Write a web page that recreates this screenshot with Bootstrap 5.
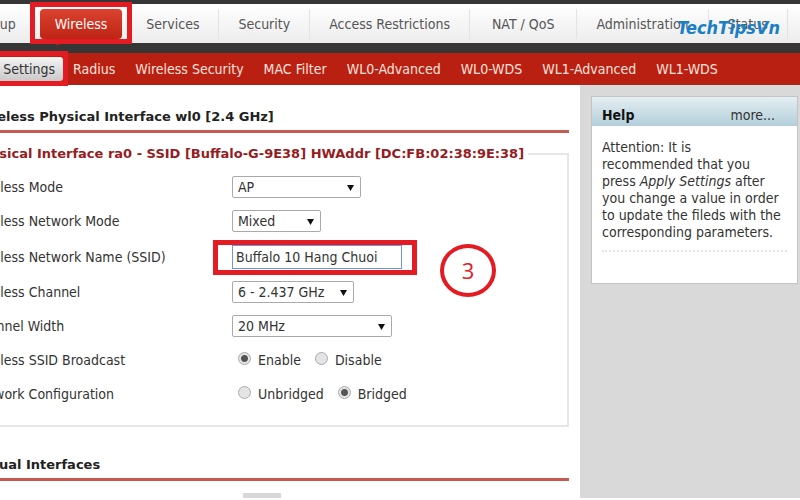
<!DOCTYPE html>
<html lang="en">
<head>
<meta charset="utf-8">
<meta name="viewport" content="width=device-width, initial-scale=1">
<title>Wireless Settings</title>
<link href="https://cdn.jsdelivr.net/npm/bootstrap@5.3.0/dist/css/bootstrap.min.css" rel="stylesheet">
<style>
  :root { --ui-font: "DejaVu Sans Condensed", "DejaVu Sans", sans-serif; --callout: #e31b23; }
  body { font-family: var(--ui-font); font-size: 14px; line-height: 18px; color: #333; background: #fff; overflow: hidden; }
  .page { height: 100vh; padding-bottom: 2px; overflow: hidden; }
  .top-bar { background: #363636; padding: 4px 0 10px; }
  .tabs { background: linear-gradient(#fff, #ececec); height: 39px; margin-left: -40px; }
  .tabs .nav-item + .nav-item { border-left: 1px solid #e3e3e3; }
  .tabs .nav-item.is-open, .tabs .nav-item.is-open + .nav-item { border-left-color: transparent; }
  .tabs .nav-link { color: #555; padding: 6px 19px; }
  .tabs .nav-link.roomy { padding: 6px 22px; }
  .tabs .nav-link.active { position: relative; color: #fff; background: linear-gradient(#dc4230, #bd2413); border-radius: 4px; padding: 6px 15px; margin: 0 4px; }
  .tabs .nav-link.active::after { content: ""; position: absolute; left: 9px; top: 100%; width: 18px; height: 7px; background: #bd2413; clip-path: polygon(0 0, 100% 0, 50% 100%); }
  .sub-bar { background: #b92012; height: 32px; flex-shrink: 0; border-bottom: 1px solid #9d2a20; }
  .sub-links { margin-left: -42px; }
  .sub-bar .nav-link { color: #ffe4de; padding: 3px 8px; margin-right: 4px; }
  .sub-bar .nav-link.active { color: #333; background: linear-gradient(#f4f4f4, #c9c9c9); border-radius: 3px; margin-right: 2px; }
  .body-row { min-height: 0; overflow: hidden; }
  .content-col { margin-left: -28px; padding: 20px 11px 0 0; }
  .section-title { font: 700 13px/24px "DejaVu Sans", sans-serif; color: #222; border-bottom: 3px solid #c65a50; padding-bottom: 1px; margin: 0; }
  .panel { border: 2px solid #e6e6e6; border-left: 0; padding: 0 0 14px; margin: 12px 0 26px; position: relative; }
  .panel legend { float: none; width: auto; font: 700 13px/18px "DejaVu Sans", sans-serif; color: #961c22; padding-right: 4px; margin: 0 0 7px; }
  .field { min-height: 34px; }
  .field-tall { min-height: 37px; }
  .field-name { width: 260px; }
  .pick { width: auto; height: 22px; font-size: 14px; line-height: 18px; color: #333; padding: 0 20px 0 5px; border: 1px solid #aaa; border-radius: 2px;
    background: #fff url("data:image/svg+xml,%3Csvg xmlns='http://www.w3.org/2000/svg' viewBox='0 0 8 8'%3E%3Cpath d='M0 1h8L4 8z' fill='%23111'/%3E%3C/svg%3E") no-repeat right 6px center / 7px 7px; }
  .pick-mode { width: 129px; } .pick-net { width: 89px; } .pick-chan { width: 122px; } .pick-width { width: 160px; }
  .ssid { width: 170px; height: 24px; font-size: 14px; color: #333; padding: 0 3px; border: 1px solid #6f97d8; border-radius: 0; }
  .ssid-wrap { position: relative; }
  .opt { margin-right: 14px; }
  .opt input { width: 13px; height: 13px; margin: 0 7px 3px 6px; border: 1px solid #aaa; background: #e4e4e4; }
  .opt + .opt input { margin-left: 0; }
  .opt .form-check-input:checked { background: radial-gradient(circle, #555 0 3px, #e4e4e4 4px); border-color: #aaa; }
  .callout-box { position: absolute; border: 5px solid var(--callout); pointer-events: none; }
  .callout-tab { left: 30px; top: 2px; width: 102px; height: 42px; }
  .callout-sub { left: -10px; top: 51px; width: 78px; height: 35px; }
  .callout-ssid { left: -19px; top: -5px; width: 204px; height: 35px; }
  .callout-num { position: absolute; left: 208px; top: -1px; width: 56px; height: 53px; border: 4px solid var(--callout); border-radius: 50%; color: var(--callout); font: 22px "Open Sans", sans-serif; }
  .side-col { flex: 0 0 220px; background: #d9d9d9; padding: 11px 2px 0 11px; }
  .help-card { border: 1px solid #c4c4c4; border-radius: 0; min-height: 188px; }
  .help-card .card-header { background: linear-gradient(#e4eef2, #b3cfda); border: 0; border-radius: 0; padding: 9px 22px 2px 10px; color: #333; }
  .help-card .card-body { padding: 13px 10px; line-height: 17px; color: #333; }
  .help-card a { color: #333; }
  .help-card h2 { font-size: 14px; line-height: 18px; font-weight: 700; color: #111; margin: 0; }
  .help-rule { border-top: 2px dotted #e4e4e4; margin-top: 9px; }
  .watermark { position: absolute; right: 20px; top: 17px; color: #1a7fc4; font: italic 700 18px/22px "DejaVu Sans Condensed", sans-serif; }
  .add-btn { width: 38px; height: 22px; margin: 12px 0 0 271px; padding: 0; border: 0; border-radius: 0; background: #d8d8d8; }
</style>
<script src="https://cdn.jsdelivr.net/npm/bootstrap@5.3.0/dist/js/bootstrap.bundle.min.js"></script>
</head>
<body>
<div class="page d-flex flex-column position-relative">
  <header class="top-bar">
    <ul class="tabs nav flex-nowrap align-items-center">
      <li class="nav-item"><a class="nav-link" href="#">Setup</a></li>
      <li class="nav-item is-open"><a class="nav-link active" href="#">Wireless</a></li>
      <li class="nav-item"><a class="nav-link" href="#">Services</a></li>
      <li class="nav-item"><a class="nav-link" href="#">Security</a></li>
      <li class="nav-item"><a class="nav-link text-nowrap" href="#">Access Restrictions</a></li>
      <li class="nav-item"><a class="nav-link roomy text-nowrap" href="#">NAT / QoS</a></li>
      <li class="nav-item"><a class="nav-link" href="#">Administration</a></li>
      <li class="nav-item border-end"><a class="nav-link" href="#">Status</a></li>
    </ul>
  </header>
  <div class="sub-bar d-flex">
    <nav class="sub-links nav flex-nowrap align-items-center text-nowrap">
      <a class="nav-link active" href="#">Basic Settings</a>
      <a class="nav-link" href="#">Radius</a>
      <a class="nav-link" href="#">Wireless Security</a>
      <a class="nav-link" href="#">MAC Filter</a>
      <a class="nav-link" href="#">WL0-Advanced</a>
      <a class="nav-link" href="#">WL0-WDS</a>
      <a class="nav-link" href="#">WL1-Advanced</a>
      <a class="nav-link" href="#">WL1-WDS</a>
    </nav>
  </div>
  <div class="body-row d-flex flex-grow-1">
    <main class="content-col flex-grow-1">
      <h2 class="section-title">Wireless Physical Interface wl0 [2.4 GHz]</h2>
      <fieldset class="panel">
        <legend>Physical Interface ra0 - SSID [Buffalo-G-9E38] HWAddr [DC:FB:02:38:9E:38]</legend>
        <div class="field d-flex align-items-center">
          <label class="field-name" for="mode">Wireless Mode</label>
          <select class="pick form-select pick-mode" id="mode"><option>AP</option></select>
        </div>
        <div class="field d-flex align-items-center">
          <label class="field-name" for="net">Wireless Network Mode</label>
          <select class="pick form-select pick-net" id="net"><option>Mixed</option></select>
        </div>
        <div class="field field-tall d-flex align-items-center">
          <label class="field-name" for="ssid">Wireless Network Name (SSID)</label>
          <div class="ssid-wrap">
            <input class="ssid form-control" id="ssid" type="text" value="Buffalo 10 Hang Chuoi">
            <div class="callout-box callout-ssid"></div>
            <div class="callout-num d-flex align-items-center justify-content-center">3</div>
          </div>
        </div>
        <div class="field d-flex align-items-center">
          <label class="field-name" for="chan">Wireless Channel</label>
          <select class="pick form-select pick-chan" id="chan"><option>6 - 2.437 GHz</option></select>
        </div>
        <div class="field d-flex align-items-center">
          <label class="field-name" for="width">Channel Width</label>
          <select class="pick form-select pick-width" id="width"><option>20 MHz</option></select>
        </div>
        <div class="field d-flex align-items-center" role="radiogroup" aria-labelledby="bc">
          <span class="field-name" id="bc">Wireless SSID Broadcast</span>
          <label class="opt d-flex align-items-center"><input class="form-check-input" type="radio" name="broadcast" checked>Enable</label>
          <label class="opt d-flex align-items-center"><input class="form-check-input" type="radio" name="broadcast">Disable</label>
        </div>
        <div class="field d-flex align-items-center" role="radiogroup" aria-labelledby="nc">
          <span class="field-name" id="nc">Network Configuration</span>
          <label class="opt d-flex align-items-center"><input class="form-check-input" type="radio" name="bridge">Unbridged</label>
          <label class="opt d-flex align-items-center"><input class="form-check-input" type="radio" name="bridge" checked>Bridged</label>
        </div>
      </fieldset>
      <h2 class="section-title">Virtual Interfaces</h2>
      <button class="add-btn btn d-block" type="button" aria-label="Add"></button>
    </main>
    <aside class="side-col">
      <div class="help-card card">
        <div class="card-header d-flex justify-content-between">
          <h2>Help</h2><a class="text-decoration-none" href="#">more...</a>
        </div>
        <div class="card-body">
          Attention: It is<br>recommended that you<br>press <em>Apply Settings</em> after<br>you change a value in order<br>to update the fileds with the<br>corresponding parameters.
          <div class="help-rule"></div>
        </div>
      </div>
    </aside>
  </div>
  <div class="callout-box callout-tab"></div>
  <div class="callout-box callout-sub"></div>
  <div class="watermark">TechTipsVn</div>
</div>
</body>
</html>
